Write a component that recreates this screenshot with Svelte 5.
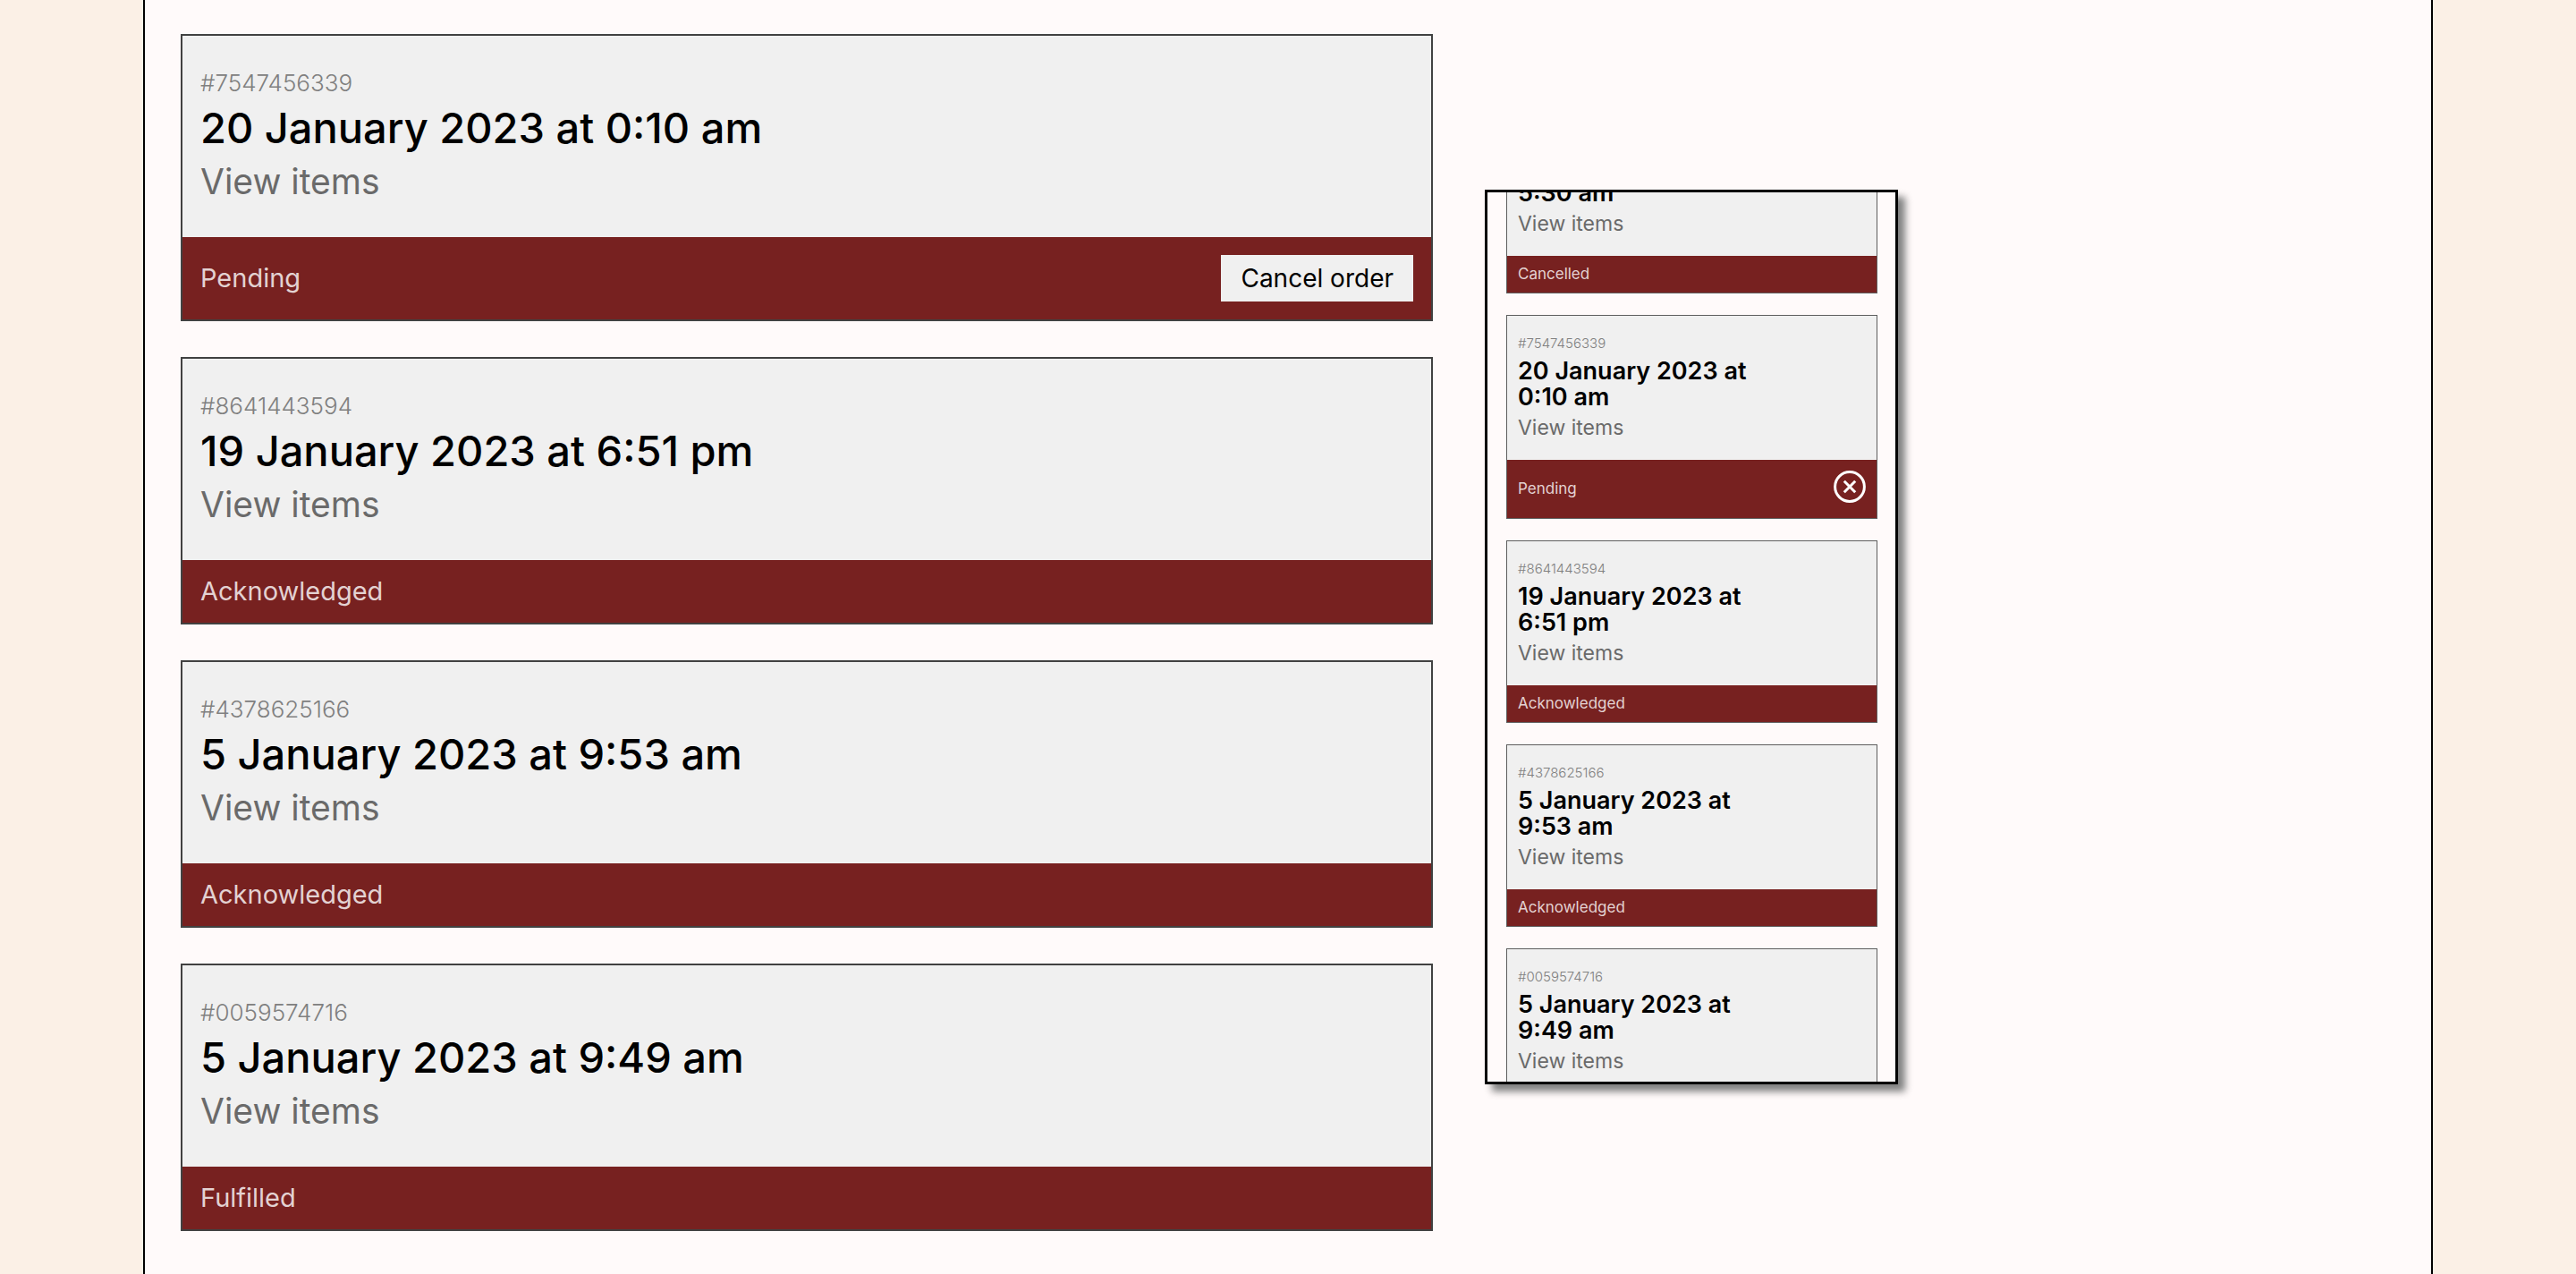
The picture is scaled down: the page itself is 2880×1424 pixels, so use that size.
<script>
  const orders = [
    { id: '7547456339', date: '20 January 2023 at 0:10 am', status: 'Pending' },
    { id: '8641443594', date: '19 January 2023 at 6:51 pm', status: 'Acknowledged' },
    { id: '4378625166', date: '5 January 2023 at 9:53 am', status: 'Acknowledged' },
    { id: '0059574716', date: '5 January 2023 at 9:49 am', status: 'Fulfilled' }
  ];
  const scrolled = [{ id: '', date: '5:30 am', status: 'Cancelled' }, ...orders];
</script>

{#snippet card(order, compact)}
  <li class="card">
    <div class="body">
      {#if order.id}<p class="number">#{order.id}</p>{/if}
      <h2>{order.date}</h2>
      <a class="view" href="#items">View items</a>
    </div>
    <div class="status">
      <span>{order.status}</span>
      {#if order.status === 'Pending'}
        {#if compact}
          <button class="round" type="button" aria-label="Cancel order">
            <svg viewBox="0 0 36 36" aria-hidden="true">
              <circle cx="18" cy="18" r="16.4" />
              <path d="M11.8 11.8l12.4 12.4M24.2 11.8L11.8 24.2" />
            </svg>
          </button>
        {:else}
          <button class="cancel" type="button">Cancel order</button>
        {/if}
      {/if}
    </div>
  </li>
{/snippet}

<main>
  <ul class="orders">
    {#each orders as order}
      {@render card(order, false)}
    {/each}
  </ul>
  <section class="phone" aria-label="Orders on a small screen">
    <ul class="orders compact">
      {#each scrolled as order}
        {@render card(order, true)}
      {/each}
    </ul>
  </section>
</main>

<style>
  :global(body) {
    background: #fbf0e6;
  }
  main {
    box-sizing: border-box;
    display: flex;
    align-items: flex-start;
    gap: 58px;
    min-height: 100vh;
    margin: 0 160px;
    padding: 38px 40px;
    border: solid #000;
    border-width: 0 2px;
    background: #fffafa;
    font-family: Inter, 'Liberation Sans', sans-serif;
  }
  .orders {
    flex: 0 1 1400px;
    display: flex;
    flex-direction: column;
    gap: 40px;
    margin: 0;
    padding: 0;
    list-style: none;
  }
  .card {
    border: 2px solid #414141;
    background: #f0f0f0;
  }
  .body {
    display: flex;
    flex-direction: column;
    align-items: flex-start;
    padding: 35px 20px 34px;
  }
  .number {
    margin: 0;
    color: #808080;
    font-size: 26px;
    font-weight: 300;
    line-height: 36px;
  }
  h2 {
    margin: 0;
    color: #000;
    font-size: 47px;
    font-weight: 500;
    line-height: 64px;
  }
  .view {
    color: #6a6a6a;
    font-size: 39px;
    line-height: 56px;
    text-decoration: none;
  }
  .status {
    display: flex;
    align-items: center;
    justify-content: space-between;
    min-height: 70px;
    padding: 0 20px;
    background: #772120;
    color: #e3d2d2;
    font-size: 29px;
  }
  .status span {
    padding-bottom: 2px;
  }
  button {
    border: 0;
    cursor: pointer;
  }
  .cancel {
    margin: 20px 0;
    padding: 0 22px;
    background: #f0f0f0;
    color: #000;
    font: 400 28px/52px Inter, sans-serif;
  }
  .phone {
    box-sizing: border-box;
    flex: none;
    width: 462px;
    height: 1000px;
    margin-top: 174px;
    padding: 0 20px 0 21px;
    overflow: hidden;
    border: 3px solid #000;
    box-shadow: 8px 8px 8px #808080;
  }
  .compact {
    gap: 24px;
    margin-top: -36px;
  }
  .compact .card {
    border: 1px solid #5e5e5e;
  }
  .compact .body {
    gap: 6px;
    padding: 21px 12px 22px;
  }
  .compact .number {
    font-size: 15px;
    line-height: 20px;
  }
  .compact h2 {
    max-width: 280px;
    font-size: 27px;
    font-weight: 600;
    line-height: 29px;
  }
  .compact .view {
    font-size: 23px;
    line-height: 28px;
  }
  .compact .status {
    min-height: 41px;
    padding: 0 12px;
    font-size: 17px;
  }
  .round {
    width: 36px;
    height: 36px;
    margin: 12px 0 17px;
    padding: 0;
    background: none;
  }
  .round svg {
    display: block;
    fill: none;
    stroke: #fff;
    stroke-width: 3;
  }
</style>
